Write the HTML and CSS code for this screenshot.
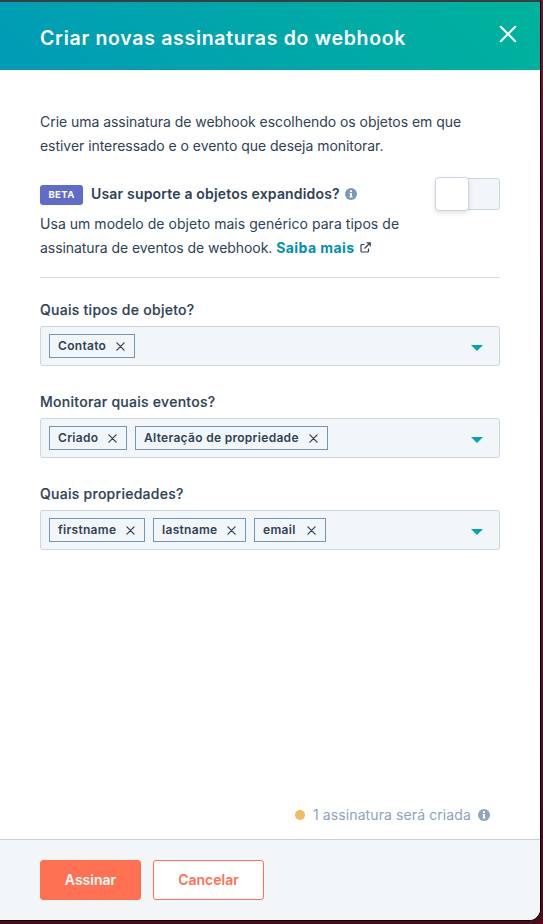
FILE: index.html
```html
<!DOCTYPE html>
<html lang="pt-BR">
<head>
<meta charset="utf-8">
<title>Criar novas assinaturas do webhook</title>
<link rel="stylesheet" href="styles.css">
</head>
<body>
<svg class="sprite" aria-hidden="true">
  <symbol id="x" viewBox="0 0 10 10"><path d="M1 1l8 8M9 1L1 9" fill="none" stroke="currentColor" stroke-linecap="round"/></symbol>
  <symbol id="info" viewBox="0 0 12 12"><circle cx="6" cy="6" r="6" fill="currentColor"/><path d="M5 2.2h2v1.7H5zM4.5 5H7v3.4h.6v1.1H4.4V8.4H5V6.1h-.5z" fill="#fff"/></symbol>
</svg>
<main class="panel">
  <header class="header">
    <h1 class="title">Criar novas assinaturas do webhook</h1>
    <button class="close" aria-label="Fechar"><svg width="18" height="18"><use href="#x"/></svg></button>
  </header>
  <section class="body">
    <p class="intro">Crie uma assinatura de webhook escolhendo os objetos em que<br>estiver interessado e o evento que deseja monitorar.</p>
    <div class="option">
      <div class="option-text">
        <div class="option-head"><span class="beta">BETA</span><strong class="question">Usar suporte a objetos expandidos?</strong><svg class="info" width="12" height="12"><use href="#info"/></svg></div>
        <p class="desc"><span class="d1">Usa um modelo de objeto mais genérico para tipos de</span><br><span class="d2">assinatura de eventos de webhook.</span> <a class="link">Saiba mais</a><svg class="ext" width="11" height="11" viewBox="0 0 11 11"><path d="M4.500 2.500H2Q1 2.500 1 3.500V9q0 1 1 1h5.500q1 0 1-1V6.500M6.500.8h3.700v3.700M10 1L4.500 6.500" fill="none" stroke="currentColor" stroke-width="1.200"/></svg></p>
      </div>
      <div class="toggle"><div class="knob"></div></div>
    </div>
    <div class="field">
      <div class="label">Quais tipos de objeto?</div>
      <div class="select"><span class="chip c1"><span>Contato</span><svg width="9" height="9"><use href="#x"/></svg></span><i class="caret"></i></div>
    </div>
    <div class="field">
      <div class="label">Monitorar quais eventos?</div>
      <div class="select"><span class="chip c2"><span>Criado</span><svg width="9" height="9"><use href="#x"/></svg></span><span class="chip c3"><span>Alteração de propriedade</span><svg width="9" height="9"><use href="#x"/></svg></span><i class="caret"></i></div>
    </div>
    <div class="field">
      <div class="label">Quais propriedades?</div>
      <div class="select"><span class="chip c4"><span>firstname</span><svg width="9" height="9"><use href="#x"/></svg></span><span class="chip c5"><span>lastname</span><svg width="9" height="9"><use href="#x"/></svg></span><span class="chip c6"><span>email</span><svg width="9" height="9"><use href="#x"/></svg></span><i class="caret"></i></div>
    </div>
    <div class="status"><i class="dot"></i><span class="status-text">1 assinatura será criada</span><svg width="12" height="12"><use href="#info"/></svg></div>
  </section>
  <footer class="footer">
    <button class="btn primary">Assinar</button>
    <button class="btn secondary">Cancelar</button>
  </footer>
</main>
</body>
</html>
```
FILE: styles.css
```css
* { box-sizing: border-box; }
body {
  margin: 0;
  height: 924px;
  overflow: hidden;
  background: linear-gradient(#641b2d, #501226 60%, #4b0c1d);
  font: 14px/24px Inter, "Liberation Sans", sans-serif;
  color: #2f4256;
}
.sprite { display: none; }
p, h1 { margin: 0; }
svg { flex: none; }
button { font: inherit; cursor: pointer; }
.panel {
  display: flex;
  flex-direction: column;
  width: 541px;
  height: 921px;
  border-top: 2px solid #3b3d40;
  border-right: 1px solid #000;
  border-bottom: 1px solid #000;
  border-bottom-right-radius: 12px;
  background: #fff;
  overflow: hidden;
}
.header {
  display: flex;
  flex: none;
  align-items: center;
  justify-content: space-between;
  height: 68px;
  padding: 0 23px 0 40px;
  background: linear-gradient(45deg, #009bb7, #00b39c);
  color: #fff;
}
.title { font-size: 19.5px; line-height: 28px; font-weight: 600; letter-spacing: .7px; white-space: nowrap; padding-top: 3px; }
.close { display: flex; padding: 0; border: 0; background: none; color: #fff; margin-top: -4px; stroke-width: 1.2; }
.body { display: flex; flex-direction: column; flex: 1; padding: 40px 40px 12px; white-space: nowrap; }
.intro { letter-spacing: -.045px; }
.option { display: flex; justify-content: space-between; margin-top: 24px; padding-bottom: 17px; border-bottom: 1px solid #d6dfe8; }
.option-head { display: flex; align-items: center; height: 24px; margin-bottom: 6px; }
.beta {
  width: 43px;
  height: 20px;
  margin: 1px 8px 0 0;
  border-radius: 3px;
  background: #5f6bc9;
  color: #fff;
  font-size: 9.5px;
  line-height: 20px;
  font-weight: 700;
  text-align: center;
  letter-spacing: .4px;
}
.question { width: 249px; font-weight: 600; letter-spacing: .18px; }
.info { margin-left: 5px; color: #7c98b6; }
.d1 { letter-spacing: .04px; }
.d2 { letter-spacing: -.06px; }
.link { color: #0091ae; font-weight: 700; letter-spacing: .43px; }
.ext { margin-left: 5px; }
.toggle { width: 65px; height: 32px; margin-top: -4px; border: 1px solid #cbd6e2; border-radius: 3px; background: #f3f6f9; }
.knob { width: 34px; height: 34px; margin: -2px 0 0 -1px; border: 1px solid #cbd6e2; border-radius: 4px; background: #fff; box-shadow: 0 2px 5px rgba(0, 0, 0, .12); }
.field { margin-top: 20px; }
.field + .field { margin-top: 24px; }
.label { height: 28px; font-weight: 500; letter-spacing: .27px; -webkit-text-stroke: .15px; }
.select { display: flex; align-items: center; gap: 8px; height: 40px; padding: 0 16px 0 8px; border: 1px solid #cbd6e2; border-radius: 3px; background: #f3f6f9; }
.chip { display: flex; align-items: center; justify-content: space-between; height: 24px; padding: 0 9.5px 0 8px; border: 1px solid #7396b7; font-size: 12px; font-weight: 600; letter-spacing: .3px; line-height: 22px; stroke-width: 1.4; }
.c1 { width: 86px; }
.c2 { width: 78px; }
.c3 { width: 193px; }
.c4 { width: 96px; }
.c5 { width: 93px; }
.c6 { width: 72px; }
.caret { margin: 4px 0 0 auto; border: 6px solid transparent; border-top-color: #00a4bd; border-bottom: 0; }
.status { display: flex; align-items: center; justify-content: flex-end; margin-top: auto; padding-right: 10px; color: #8ea3bc; }
.dot { width: 10px; height: 10px; margin-right: 8px; border-radius: 50%; background: #f5b95f; }
.status-text { width: 158px; margin-right: 7px; letter-spacing: .1px; }
.footer { display: flex; flex: none; gap: 12px; height: 81px; padding: 20px 40px; border-top: 1px solid #c5d1dc; background: #f3f6f9; }
.btn { height: 40px; padding: 0; border: 1px solid #ff7152; border-radius: 3px; font-weight: 600; }
.primary { width: 101px; background: #ff7152; color: #fff; }
.secondary { width: 111px; background: #fff; color: #ff7152; }
```
